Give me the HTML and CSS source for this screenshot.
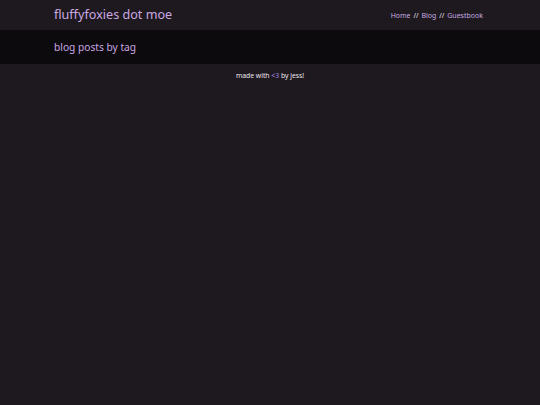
FILE: index.html
```html
<!DOCTYPE html>
<html>
<head>
<meta charset="utf-8">
<link rel="stylesheet" href="styles.css">
</head>
<body>
<header class="topbar">
  <div class="wrap topbar-inner">
    <a class="site-title" href="#">fluffyfoxies dot moe</a>
    <nav class="nav">
      <a href="#">Home</a> <span class="sep">//</span> <a href="#">Blog</a> <span class="sep">//</span> <a href="#">Guestbook</a>
    </nav>
  </div>
</header>
<section class="band">
  <div class="wrap">
    <h1 class="page-title">blog posts by tag</h1>
  </div>
</section>
<footer class="footer">made with <span class="heart">&lt;3</span> by jess!</footer>
</body>
</html>
```
FILE: styles.css
```css
html, body {
  margin: 0;
  padding: 0;
  background: #1e191f;
  font-family: "Noto Sans", "Open Sans", sans-serif;
  min-height: 100%;
}
.wrap {
  width: 432px;
  margin: 0 auto;
}
.topbar {
  height: 30px;
}
.topbar-inner {
  display: flex;
  align-items: center;
  justify-content: space-between;
  height: 29px;
}
.site-title {
  color: #caa8e2;
  text-decoration: none;
  font-size: 12.6px;
}
.nav {
  font-size: 7px;
  color: #e6e0e8;
  white-space: pre;
  padding-right: 3px;
  padding-top: 2px;
}
.nav a {
  color: #c4a9e0;
  text-decoration: none;
}
.sep {
  margin: 0 1px;
}
.band {
  background: #0c0a0d;
  height: 34px;
  display: flex;
  align-items: center;
}
.page-title {
  margin: 0 0 1px;
  font-weight: normal;
  font-size: 10.2px;
  color: #caa8e2;
}
.footer {
  text-align: center;
  color: #ece8ee;
  font-size: 6.8px;
  padding-top: 7px;
}
.heart {
  color: #a58ae0;
}
```
